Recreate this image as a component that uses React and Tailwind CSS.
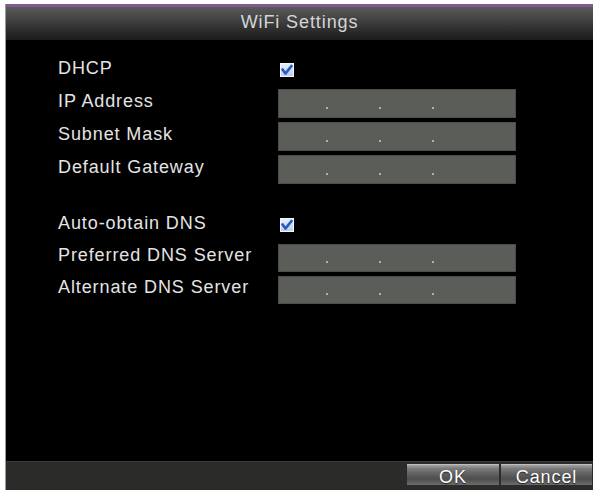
import React from 'react';

const font = { fontFamily: '"Liberation Sans", Arial, sans-serif' };

const labelCls = 'w-[220px] text-[18px] tracking-[0.9px] leading-[20px] text-[#e4e4e4] pb-[5px] whitespace-nowrap';

const CheckBox = () => (
    <svg width="14" height="14" viewBox="0 0 14 14" className="mb-[2px] ml-[2px]">
        <defs>
            <linearGradient id="cbg" x1="0" y1="0" x2="0" y2="1">
                <stop offset="0" stopColor="#e9f0fa" />
                <stop offset="1" stopColor="#b9cdec" />
            </linearGradient>
        </defs>
        <rect x="0.5" y="0.5" width="13" height="13" fill="url(#cbg)" stroke="#f2f5fa" />
        <path d="M2.5 6.5 L5.5 10.5 L11.5 3" fill="none" stroke="#2a5cc0" strokeWidth="2.8" strokeLinecap="round" strokeLinejoin="round" />
    </svg>
);

const IpField = ({ h = 'h-[29px]' }) => (
    <div className={`w-[238px] ${h} bg-[#5b5d59] border border-[#4b4d49] flex items-end pb-[8px] pl-[47px] gap-[51px]`}>
        <span className="w-[2px] h-[2px] bg-[#b0b1ad]" />
        <span className="w-[2px] h-[2px] bg-[#b0b1ad]" />
        <span className="w-[2px] h-[2px] bg-[#b0b1ad]" />
    </div>
);

const Row = ({ label, children, h = 'h-[29px]' }) => (
    <div className={`flex items-center ${h}`}>
        <div className={labelCls}>{label}</div>
        {children}
    </div>
);

const Button = ({ children, w }) => (
    <button className={`${w} h-[21px] flex items-center justify-center pt-[4px] text-[18px] tracking-[0.9px] leading-[18px] text-white bg-[linear-gradient(to_bottom,#a3a3a3_0%,#7a7a7a_18%,#5c5c5c_50%,#4e4e4e_70%,#6c6c6c_100%)] border-t border-[#bdbdbd] [text-shadow:0_1px_1px_#222]`}>
        {children}
    </button>
);

export default function App() {
    return (
        <div className="w-[598px] h-[493px] bg-white pt-[4px] overflow-hidden" style={font}>
            <div className="ml-[5px] w-[588px] h-[486px] flex flex-col border-l border-[#9a9a9a]">
                <div className="h-[36px] border-t-[3px] border-[#7d5c8b] bg-[linear-gradient(to_bottom,#5a5a5a_0%,#444_35%,#2a2a2a_75%,#1c1c1c_100%)] flex items-center justify-center pb-[2px]">
                    <span className="text-[18px] tracking-[0.9px] text-[#d6d6d6]">WiFi Settings</span>
                </div>

                <div className="flex-1 bg-black pl-[52px] pt-[16px]">
                    <div className="flex flex-col gap-[4px]">
                        <Row label="DHCP"><CheckBox /></Row>
                        <Row label="IP Address"><IpField /></Row>
                        <Row label="Subnet Mask"><IpField /></Row>
                        <Row label="Default Gateway"><IpField /></Row>
                    </div>
                    <div className="flex flex-col gap-[3px] mt-[27px]">
                        <Row label="Auto-obtain DNS"><CheckBox /></Row>
                        <Row label="Preferred DNS Server"><IpField h="h-[28px]" /></Row>
                        <Row label="Alternate DNS Server"><IpField h="h-[28px]" /></Row>
                    </div>
                </div>

                <div className="h-[29px] bg-[#2b2b29] border-t border-[#3c3c3a] flex justify-end items-start pt-[2px] pr-[1px] gap-[2px]">
                    <Button w="w-[92px]">OK</Button>
                    <Button w="w-[91px]">Cancel</Button>
                </div>
            </div>
        </div>
    );
}
